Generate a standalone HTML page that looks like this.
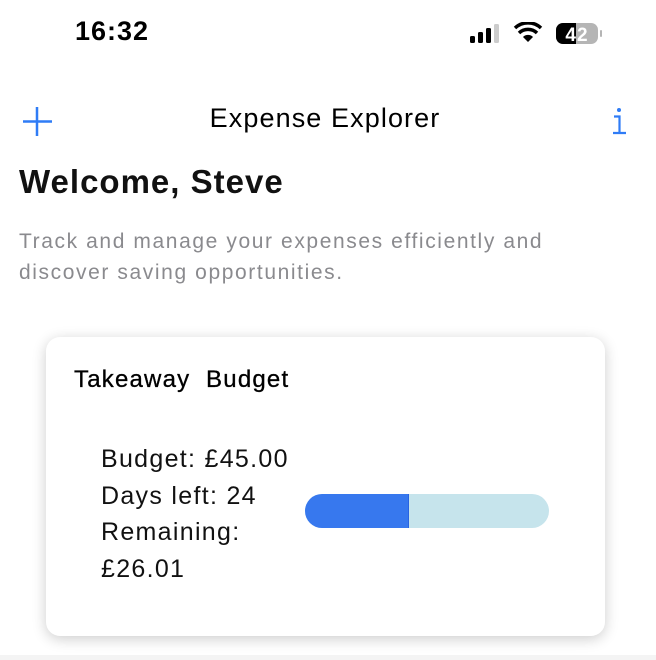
<!DOCTYPE html>
<html><head><meta charset="utf-8"><style>
body{margin:0;width:656px;height:660px;background:#fff;font-family:"Liberation Sans",sans-serif;position:relative;overflow:hidden}
.a{position:absolute;white-space:nowrap}
</style></head><body>
<div class="a" style="left:75px;top:16px;font-size:27px;font-weight:bold;color:#000;letter-spacing:1px">16:32</div>
<svg class="a" style="left:468px;top:22px" width="140" height="24">
<rect x="2" y="14" width="5" height="7" rx="1.5" fill="#000"/>
<rect x="10" y="10" width="5" height="11" rx="1.5" fill="#000"/>
<rect x="18" y="6" width="5" height="15" rx="1.5" fill="#000"/>
<rect x="26" y="2" width="5" height="19" rx="1.5" fill="#ccc"/>
<path d="M60 20 L55 15 A7 7 0 0 1 65 15 Z" fill="#000"/>
<path d="M51 11 A13 13 0 0 1 69 11" stroke="#000" stroke-width="3.5" fill="none"/>
<path d="M47 6 A19 19 0 0 1 73 6" stroke="#000" stroke-width="3.5" fill="none"/>
<rect x="88" y="1" width="42" height="21" rx="7" fill="#b5b5b5"/>
<path d="M95 1 H108 V22 H95 A7 7 0 0 1 88 15 V8 A7 7 0 0 1 95 1Z" fill="#000"/>
<rect x="132" y="8" width="2" height="7" rx="1" fill="#b5b5b5"/>
<text x="109" y="19" font-size="19" font-weight="bold" fill="#fff" text-anchor="middle" font-family="Liberation Sans" letter-spacing="1">42</text>
</svg>
<svg class="a" style="left:22px;top:106px" width="32" height="32"><path d="M15 1V30M1 15.5H30" stroke="#2f7cf6" stroke-width="2.5"/></svg>
<div class="a" style="left:-3px;width:656px;text-align:center;top:103px;font-size:27px;color:#000;letter-spacing:1.1px">Expense Explorer</div>
<svg class="a" style="left:610px;top:104px" width="20" height="32"><circle cx="9" cy="6" r="2" fill="#2f7cf6"/><path d="M4 12.5H9.5V29M3 29H16" stroke="#2f7cf6" stroke-width="2.2" fill="none"/></svg>
<div class="a" style="left:19px;top:163px;font-size:33px;font-weight:bold;color:#111;letter-spacing:1px">Welcome, Steve</div>
<div class="a" style="left:19px;top:226px;font-size:21px;color:#8a8a8e;line-height:31px;letter-spacing:1.6px">Track and manage your expenses efficiently and<br>discover saving opportunities.</div>
<div class="a" style="left:0;top:655px;width:656px;height:5px;background:#f4f4f4"></div>
<div class="a" style="left:46px;top:337px;width:559px;height:299px;border-radius:14px;background:#fff;box-shadow:0 3px 14px rgba(0,0,0,.2)"></div>
<div class="a" style="left:74px;top:366px;font-size:24px;color:#000;letter-spacing:1.2px;-webkit-text-stroke:0.3px #000">Takeaway&nbsp; Budget</div>
<div class="a" style="left:101px;top:441px;font-size:25px;line-height:36.5px;color:#111;letter-spacing:1.3px">Budget: £45.00<br>Days left: 24<br>Remaining:<br>£26.01</div>
<div class="a" style="left:305px;top:494px;width:244px;height:34px;border-radius:17px;background:#c6e4ec;overflow:hidden"><div style="width:103px;height:34px;background:#3778ee;border-right:1px solid #2a64e0"></div></div>
</body></html>
